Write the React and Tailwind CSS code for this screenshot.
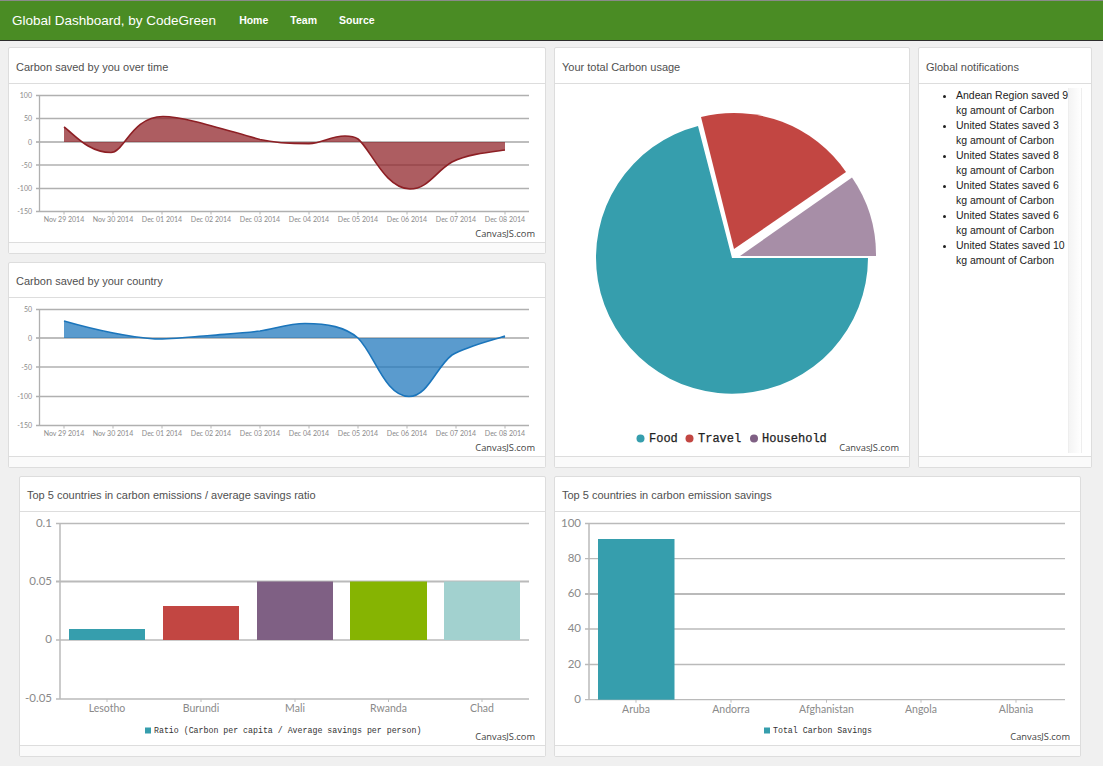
import React from "react";

const dates = ["Nov 29 2014","Nov 30 2014","Dec 01 2014","Dec 02 2014","Dec 03 2014","Dec 04 2014","Dec 05 2014","Dec 06 2014","Dec 07 2014","Dec 08 2014"];
const tickX = dates.map((_, i) => 64 + i * 49);
const labelFont = "Lato, sans-serif";
const monoFont = "'Liberation Mono', monospace";

function Credit({ x, y }) {
  return <text x={x} y={y} textAnchor="end" fontSize="9.3" fill="#444" fontFamily="'Open Sans', sans-serif">CanvasJS.com</text>;
}

function LineChart({ box, grid, labels, axisBottom, d, start, end, baseline, fill, stroke, creditY }) {
  return (
    <svg className="block" width={box[2]} height={box[3]} viewBox={box.join(" ")}>
      {grid.map((y, i) => (
        <line key={i} x1="36" x2="529" y1={y} y2={y} stroke={y === baseline ? "#bdbdbd" : "#b0b0b0"} strokeWidth={y === baseline ? 2 : 1.3} />
      ))}
      <line x1="39.5" x2="39.5" y1={grid[0]} y2={axisBottom} stroke="#b0b0b0" strokeWidth="1.3" />
      {tickX.map((x) => <line key={x} x1={x} x2={x} y1={axisBottom} y2={axisBottom + 3} stroke="#b5b5b5" />)}
      <path d={`${d} L${end},${baseline} L${start},${baseline} Z`} fill={fill} fillOpacity="0.72" />
      <path d={d} fill="none" stroke={stroke} strokeWidth="1.6" />
      {labels.map((l, i) => (
        <text key={l} x="32" y={grid[i] + 2.5} textAnchor="end" fontSize="7" fill="#8a8a8a" fontFamily={labelFont}>{l}</text>
      ))}
      {dates.map((t, i) => (
        <text key={t} x={tickX[i]} y={axisBottom + 10} textAnchor="middle" fontSize="7" fill="#8a8a8a" fontFamily={labelFont}>{t}</text>
      ))}
      <Credit x="535" y={creditY} />
    </svg>
  );
}

const legendText = { fontSize: "12", fill: "#222", stroke: "#222", strokeWidth: "0.25", fontFamily: monoFont };

const pie = (
  <svg className="block" width="354" height="373" viewBox="555 84 354 373">
    <path d="M732,258 L868,258 A136,136 0 1 1 698,126 Z" fill="#369ead" />
    <path d="M734,249 L701,117 A136,136 0 0 1 846,172 Z" fill="#c24642" />
    <path d="M740,256 L852,177.500 A136,136 0 0 1 876,256 Z" fill="#a78ea7" />
    <circle cx="640.500" cy="438.500" r="4" fill="#369ead" />
    <text x="649" y="442" {...legendText}>Food</text>
    <circle cx="689.500" cy="438.500" r="4" fill="#c24642" />
    <text x="698" y="442" {...legendText}>Travel</text>
    <circle cx="754" cy="438.500" r="4" fill="#7f6084" />
    <text x="762" y="442" {...legendText}>Household</text>
    <Credit x="899" y="451" />
  </svg>
);

function BarChart({ box, grid, labels, axisX, rightX, tops, bars, names, nameX, legendX, legendText, creditX, yLabelX, thick }) {
  const bottom = grid[grid.length - 1];
  return (
    <svg className="block" width={box[2]} height={box[3]} viewBox={box.join(" ")}>
      {grid.map((y, i) => (
        <line key={i} x1={axisX - 4} x2={rightX} y1={y} y2={y} stroke="#bababa" strokeWidth={y === thick ? 2 : 1.3} />
      ))}
      <line x1={axisX} x2={axisX} y1={grid[0]} y2={bottom} stroke="#bababa" strokeWidth="1.500" />
      {nameX.map((x) => <line key={x} x1={x} x2={x} y1={bottom} y2={bottom + 3} stroke="#bdbdbd" />)}
      {bars.map(([x1, x2, top, color]) => (
        <rect key={x1} x={x1} y={top} width={x2 - x1} height={tops - top} fill={color} />
      ))}
      {labels.map((l, i) => (
        <text key={l} x={yLabelX} y={grid[i] + 3} textAnchor="end" fontSize="11.500" fill="#8a8a8a" fontFamily={labelFont}>{l}</text>
      ))}
      {names.map((n, i) => (
        <text key={n} x={nameX[i]} y={bottom + 13} textAnchor="middle" fontSize="10.500" fill="#8a8a8a" fontFamily={labelFont}>{n}</text>
      ))}
      <rect x={legendX} y="727.500" width="6" height="6" fill="#369ead" />
      <text x={legendX + 9} y="733" fontSize="8.250" fill="#333" fontFamily={monoFont}>{legendText}</text>
      <Credit x={creditX} y="740" />
    </svg>
  );
}

function Panel({ title, className, headerClass, children }) {
  return (
    <section className={`flex flex-col bg-white border border-[#dddddd] rounded-[2px] ${className}`}>
      <header className={`flex items-center px-[7px] pt-[3px] border-b border-[#dddddd] text-[11px] text-[#505050] ${headerClass}`}>{title}</header>
      <div className="flex-1 min-h-0 overflow-hidden">{children}</div>
      <footer className="h-[11px] bg-[#fafafa] border-t border-[#dddddd]" />
    </section>
  );
}

const notes = [
  "Andean Region saved 9", "United States saved 3", "United States saved 8",
  "United States saved 6", "United States saved 6", "United States saved 10",
];

export default function App() {
  return (
    <div className="min-h-screen bg-[#f0f0f0] font-['Liberation_Sans',sans-serif]">
      <nav className="h-[41px] flex items-center bg-[#4a8c24] border-t border-t-[#8a8a8a] border-b border-b-[#2c2c2c] text-white">
        <span className="ml-[12px] text-[13.5px] leading-none">Global Dashboard, by CodeGreen</span>
        <div className="ml-[23px] flex gap-[22px] text-[10.5px] font-bold">
          <a>Home</a>
          <a>Team</a>
          <a>Source</a>
        </div>
      </nav>
      <main className="pt-[6px] pl-[8px] flex flex-col gap-[8px]">
        <div className="flex gap-[8px] h-[421px]">
          <div className="w-[538px] flex flex-col gap-[8px]">
            <Panel title="Carbon saved by you over time" className="h-[207px]" headerClass="h-[36px]">
              <LineChart
                box={[9, 84, 536, 158]}
                grid={[95.5, 118.5, 142, 165, 188.5, 211.5]}
                labels={["100", "50", "0", "-50", "-100", "-150"]}
                axisBottom={211.5}
                baseline={142}
                start={64}
                end={505}
                d="M64,127 C74,134 88,152.500 111,152.500 C124,152.500 132,116.500 163,116.500 C185,116.500 225,130 260,139.500 C275,143 290,143.700 309,143.700 C322,143.700 330,136 345,136 C352,136 355,137 358,139 C370,148 385,189 410,189 C428,189 436,171 452,162 C468,154 490,152 505,150"
                fill="#8d1f24"
                stroke="#8d1f24"
                creditY={237}
              />
            </Panel>
            <Panel title="Carbon saved by your country" className="h-[206px]" headerClass="h-[35px]">
              <LineChart
                box={[9, 298, 536, 158]}
                grid={[309.5, 338, 367, 396.5, 425.5]}
                labels={["50", "0", "-50", "-100", "-150"]}
                axisBottom={425.5}
                baseline={338}
                start={64}
                end={505}
                d="M64,321 C85,327 118,336 155,339 C172,339 190,337 210,335.500 C228,334 245,333 260,331 C275,328.500 290,323.500 305,323.500 C328,323.500 345,327 358,338 C375,355 385,396.500 409,396.500 C428,396.500 436,367 452,355 C468,346 490,341 505,336"
                fill="#1b75bb"
                stroke="#1b75bb"
                creditY={451}
              />
            </Panel>
          </div>
          <Panel title="Your total Carbon usage" className="w-[356px]" headerClass="h-[36px]">{pie}</Panel>
          <Panel title="Global notifications" className="w-[174px]" headerClass="h-[36px]">
            <div className="flex h-[369px] pt-[4px]">
              <ul className="w-[149px] pl-[37px] list-disc text-[10.5px] leading-[15px] text-[#222222] whitespace-nowrap">
                {notes.map((n, i) => (
                  <li key={i}>{n}<br />kg amount of Carbon</li>
                ))}
              </ul>
              <div className="w-[14px] bg-gradient-to-r from-[#f4f4f4] to-[#ffffff] border-l border-r border-[#eeeeee]" />
            </div>
          </Panel>
        </div>
        <div className="flex gap-[8px] pl-[11px]">
          <Panel title="Top 5 countries in carbon emissions / average savings ratio" className="w-[527px] h-[281px]" headerClass="h-[35px]">
            <BarChart
              box={[20, 512, 525, 233]}
              grid={[523.5, 581.5, 640, 699]}
              labels={["0.1", "0.05", "0", "-0.05"]}
              axisX={60}
              rightX={529}
              tops={640}
              bars={[[69,145,629,"#369ead"],[163,239,606,"#c24642"],[257,333,581.5,"#7f6084"],[350,427,581.5,"#86b402"],[444,520,581.5,"#a2d1cf"]]}
              names={["Lesotho","Burundi","Mali","Rwanda","Chad"]}
              nameX={[107,201,295,388.5,482]}
              legendX={145}
              legendText="Ratio (Carbon per capita / Average savings per person)"
              creditX={535}
              yLabelX={52}
              thick={581.5}
            />
          </Panel>
          <Panel title="Top 5 countries in carbon emission savings" className="w-[527px] h-[281px]" headerClass="h-[35px]">
            <BarChart
              box={[555, 512, 525, 233]}
              grid={[523.5, 558.7, 594, 629, 664.5, 699.7]}
              labels={["100","80","60","40","20","0"]}
              axisX={589}
              rightX={1065}
              tops={699.7}
              bars={[[598,674.500,539,"#369ead"]]}
              names={["Aruba","Andorra","Afghanistan","Angola","Albania"]}
              nameX={[636,731,826.500,921,1016]}
              legendX={764}
              legendText="Total Carbon Savings"
              creditX={1070}
              yLabelX={581}
              thick={594}
            />
          </Panel>
        </div>
      </main>
    </div>
  );
}
